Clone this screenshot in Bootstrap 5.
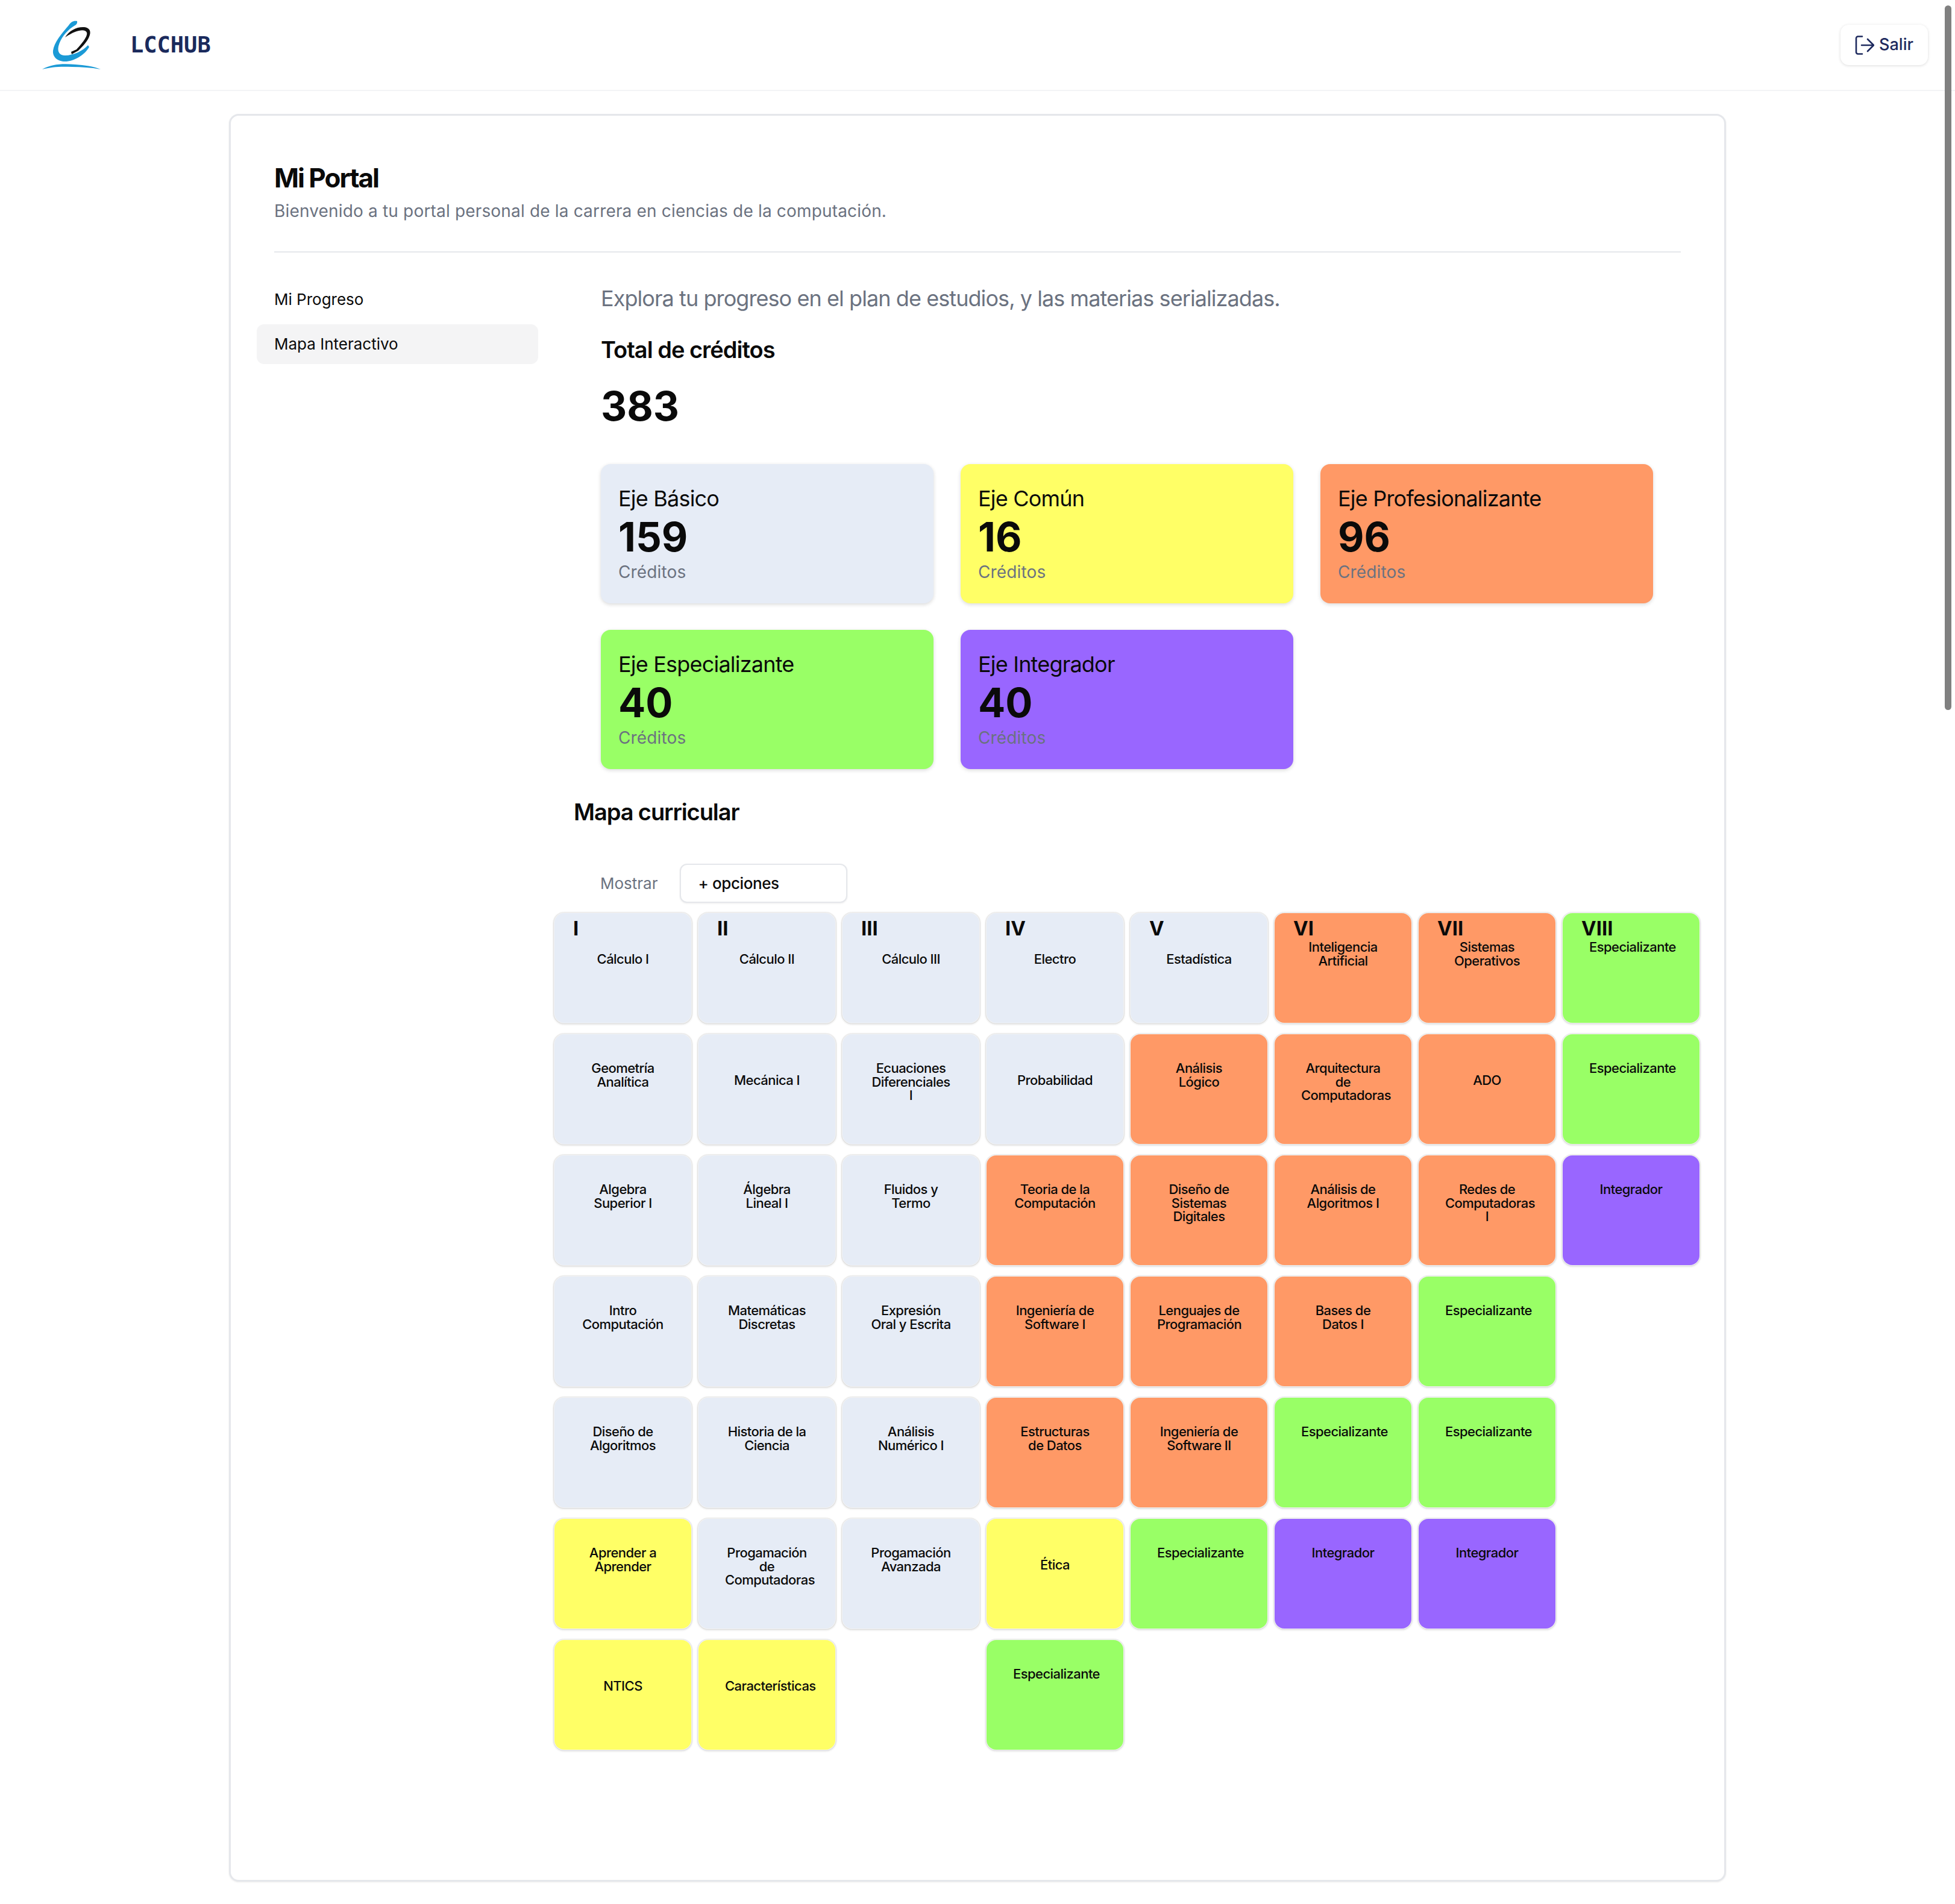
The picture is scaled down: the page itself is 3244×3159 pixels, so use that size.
<!DOCTYPE html>
<html lang="es">
<head>
    <meta charset="UTF-8">
    <title>LCCHUB - Mi Portal</title>
    <link href="https://cdn.jsdelivr.net/npm/bootstrap@5.3.0/dist/css/bootstrap.min.css" rel="stylesheet">
    <style>
        body { font-family: Inter, "Liberation Sans", sans-serif; color: #0a0a0a; background: #fff; }
        .top-bar { height: 151px; padding: 0 45px 0 70px; border-bottom: 2px solid #f3f4f6; }
        .brand-name { font-family: "DejaVu Sans Mono", monospace; font-weight: 700; font-size: 37px; color: #1a2a5c; margin-left: 49px; }
        .exit-btn { width: 145px; height: 67px; font-size: 27px; font-weight: 500; color: #1e2a5e; background: #fff; border: 1px solid transparent; border-radius: 14px; box-shadow: 0 1px 5px rgba(0,0,0,.14); }
        .fake-scroll { position: absolute; top: 9px; right: 6px; width: 11px; height: 1169px; background: #808080; border-radius: 6px; }
        .portal-box { width: 2484px; min-height: 2933px; margin: 38px auto 37px; padding: 75px 72px 0; border: 3px solid #e5e7eb; border-radius: 16px; box-shadow: 0 1px 3px rgba(0,0,0,.08); }
        .portal-title { font-size: 44px; line-height: 56px; font-weight: 700; letter-spacing: -2px; margin: 0; }
        .portal-sub { font-size: 28px; line-height: 40px; letter-spacing: .17px; color: #6b7280; margin: 7px 0 0; }
        .portal-head { padding-bottom: 47px; border-bottom: 2px solid #e5e7eb; }
        .side-menu { width: 467px; margin: 45px 0 0 -29px; flex-shrink: 0; gap: 8px; }
        .side-menu .nav-link { height: 66px; padding: 0 29px; font-size: 26px; line-height: 66px; color: #0a0a0a; border-radius: 12px; }
        .side-menu .nav-link.active { background: #f4f4f5; }
        .main-col { margin: 52px 0 0 26px; }
        .stats-area { padding-left: 78px; }
        .explore-text { font-size: 36px; line-height: 48px; letter-spacing: -.93px; color: #6b7280; margin: 0; }
        .total-title { font-size: 38px; line-height: 48px; font-weight: 600; letter-spacing: -1px; margin: 37px 0 0; }
        .total-num { font-size: 67px; line-height: 80px; font-weight: 700; margin: 30px 0 0; }
        .stats-grid { grid-template-columns: repeat(3, 552px); column-gap: 45px; row-gap: 44px; margin-top: 56px; }
        .stat-box { height: 231px; padding: 35px 29px 0; border-radius: 16px; box-shadow: 0 2px 6px rgba(0,0,0,.15); }
        .stat-name { font-size: 36px; line-height: 44px; letter-spacing: -.8px; }
        .stat-num { font-size: 67px; line-height: 76px; font-weight: 700; margin-top: 4px; }
        .stat-unit { font-size: 28px; line-height: 40px; letter-spacing: .15px; color: #6b7280; }
        .map-title { font-size: 38px; line-height: 48px; font-weight: 600; letter-spacing: -1.1px; margin: 47px 0 0 33px; }
        .show-row { margin: 62px 0 0 77px; gap: 37px; }
        .show-label { font-size: 26px; color: #6b7280; }
        .options-btn { width: 278px; height: 65px; padding: 0 28px; font-size: 26px; font-weight: 500; letter-spacing: -.4px; color: #0a0a0a; text-align: left; background: #fff; border: 2px solid #e5e7eb; border-radius: 12px; box-shadow: 0 1px 3px rgba(0,0,0,.08); }
        .map-grid { grid-template-columns: repeat(8, 231px); grid-auto-rows: 186px; column-gap: 8px; row-gap: 15px; margin: 15px 0 0 -1px; width: 1904px; }
        .subject { position: relative; padding: 45px 44px 0; font-size: 22px; line-height: 22.5px; font-weight: 500; letter-spacing: -.55px; text-align: center; overflow-wrap: normal; word-wrap: normal; border: 2px solid rgba(0,0,0,.05); border-radius: 18px; box-shadow: 0 1px 3px rgba(0,0,0,.1); background-clip: padding-box; }
        .subject.low { padding-top: 65px; }
        .sem-num { position: absolute; top: 5px; left: 31px; font-size: 33px; line-height: 40px; font-weight: 700; letter-spacing: 0; }
        .eje-basico { background-color: #e6ecf6; }
        .eje-comun { background-color: #ffff66; }
        .eje-prof { background-color: #ff9966; }
        .eje-esp { background-color: #99ff66; }
        .eje-int { background-color: #9966ff; }
    </style>
</head>
<body>

<!-- Header -->
<nav class="top-bar d-flex align-items-center justify-content-between">
    <div class="d-flex align-items-center">
        <svg width="97" height="81" viewBox="70 36 97 81">
            <path fill="#1b9ad6" d="M128 37C122 36 118 38 114 44C102 58 90 72 88 86C87 97 96 104 108 104C122 104 140 94 148 80L146 77C138 86 122 94 108 94C99 94 95 88 97 79C100 66 110 54 120 47C124 44 129 43 128 37Z"/>
            <path fill="#111" d="M108 64C115 52 128 46 140 47C148 48 151 53 149 60C146 70 138 78 130 86L119 92L118 88L127 84C136 74 146 62 144 56C142 50 128 50 108 64Z"/>
            <path fill="#1b9ad6" d="M70 117C85 108 105 107 125 109C140 110 155 112 167 117C150 114 135 113 120 113C100 112 85 113 70 117Z"/>
        </svg>
        <span class="brand-name">LCCHUB</span>
    </div>
    <button class="btn exit-btn d-flex align-items-center justify-content-center gap-2 p-0" type="button">
        <svg width="32" height="32" viewBox="0 0 32 32" fill="none" stroke="#1e2a5e" stroke-width="2.6" stroke-linecap="round" stroke-linejoin="round">
            <path d="M12 1.5H5a3 3 0 0 0-3 3v23a3 3 0 0 0 3 3h7"/>
            <path d="M11 16h20M21 6l10 10-10 10"/>
        </svg>
        Salir
    </button>
</nav>
<div class="fake-scroll"></div>

<!-- Portal -->
<div class="card portal-box">
    <div class="portal-head">
        <h1 class="portal-title">Mi Portal</h1>
        <p class="portal-sub">Bienvenido a tu portal personal de la carrera en ciencias de la computación.</p>
    </div>

    <div class="d-flex">
        <div class="nav flex-column side-menu">
            <a class="nav-link" href="#">Mi Progreso</a>
            <a class="nav-link active" href="#">Mapa Interactivo</a>
        </div>

        <div class="main-col">
            <div class="stats-area">
                <p class="explore-text">Explora tu progreso en el plan de estudios, y las materias serializadas.</p>
                <h3 class="total-title">Total de créditos</h3>
                <div class="total-num">383</div>

                <div class="d-grid stats-grid">
                    <div class="stat-box eje-basico">
                        <div class="stat-name">Eje Básico</div>
                        <div class="stat-num">159</div>
                        <div class="stat-unit">Créditos</div>
                    </div>
                    <div class="stat-box eje-comun">
                        <div class="stat-name">Eje Común</div>
                        <div class="stat-num">16</div>
                        <div class="stat-unit">Créditos</div>
                    </div>
                    <div class="stat-box eje-prof">
                        <div class="stat-name">Eje Profesionalizante</div>
                        <div class="stat-num">96</div>
                        <div class="stat-unit">Créditos</div>
                    </div>
                    <div class="stat-box eje-esp">
                        <div class="stat-name">Eje Especializante</div>
                        <div class="stat-num">40</div>
                        <div class="stat-unit">Créditos</div>
                    </div>
                    <div class="stat-box eje-int">
                        <div class="stat-name">Eje Integrador</div>
                        <div class="stat-num">40</div>
                        <div class="stat-unit">Créditos</div>
                    </div>
                </div>
            </div>

            <h3 class="map-title">Mapa curricular</h3>

            <div class="d-flex align-items-center show-row">
                <span class="show-label">Mostrar</span>
                <button class="btn options-btn" type="button">+ opciones</button>
            </div>

            <div class="d-grid map-grid">
                <div class="subject low eje-basico"><span class="sem-num">I</span>Cálculo I</div>
                <div class="subject low eje-basico"><span class="sem-num">II</span>Cálculo II</div>
                <div class="subject low eje-basico"><span class="sem-num">III</span>Cálculo III</div>
                <div class="subject low eje-basico"><span class="sem-num">IV</span>Electro</div>
                <div class="subject low eje-basico"><span class="sem-num">V</span>Estadística</div>
                <div class="subject eje-prof"><span class="sem-num">VI</span>Inteligencia Artificial</div>
                <div class="subject eje-prof"><span class="sem-num">VII</span>Sistemas Operativos</div>
                <div class="subject eje-esp"><span class="sem-num">VIII</span>Especializante</div>

                <div class="subject eje-basico">Geometría Analítica</div>
                <div class="subject low eje-basico">Mecánica I</div>
                <div class="subject eje-basico">Ecuaciones Diferenciales I</div>
                <div class="subject low eje-basico">Probabilidad</div>
                <div class="subject eje-prof">Análisis Lógico</div>
                <div class="subject eje-prof">Arquitectura de Computadoras</div>
                <div class="subject low eje-prof">ADO</div>
                <div class="subject eje-esp">Especializante</div>

                <div class="subject eje-basico">Algebra Superior I</div>
                <div class="subject eje-basico">Álgebra Lineal I</div>
                <div class="subject eje-basico">Fluidos y Termo</div>
                <div class="subject eje-prof">Teoria de la Computación</div>
                <div class="subject eje-prof">Diseño de Sistemas Digitales</div>
                <div class="subject eje-prof">Análisis de Algoritmos I</div>
                <div class="subject eje-prof">Redes de Computadoras I</div>
                <div class="subject eje-int">Integrador</div>

                <div class="subject eje-basico">Intro Computación</div>
                <div class="subject eje-basico">Matemáticas Discretas</div>
                <div class="subject eje-basico">Expresión Oral y Escrita</div>
                <div class="subject eje-prof">Ingeniería de Software I</div>
                <div class="subject eje-prof">Lenguajes de Programación</div>
                <div class="subject eje-prof">Bases de Datos I</div>
                <div class="subject eje-esp">Especializante</div>
                <div></div>

                <div class="subject eje-basico">Diseño de Algoritmos</div>
                <div class="subject eje-basico">Historia de la Ciencia</div>
                <div class="subject eje-basico">Análisis Numérico I</div>
                <div class="subject eje-prof">Estructuras de Datos</div>
                <div class="subject eje-prof">Ingeniería de Software II</div>
                <div class="subject eje-esp">Especializante</div>
                <div class="subject eje-esp">Especializante</div>
                <div></div>

                <div class="subject eje-comun">Aprender a Aprender</div>
                <div class="subject eje-basico">Progamación de Computadoras</div>
                <div class="subject eje-basico">Progamación Avanzada</div>
                <div class="subject low eje-comun">Ética</div>
                <div class="subject eje-esp">Especializante</div>
                <div class="subject eje-int">Integrador</div>
                <div class="subject eje-int">Integrador</div>
                <div></div>

                <div class="subject low eje-comun">NTICS</div>
                <div class="subject low eje-comun">Características</div>
                <div></div>
                <div class="subject eje-esp">Especializante</div>
            </div>
        </div>
    </div>
</div>

<script src="https://cdn.jsdelivr.net/npm/bootstrap@5.3.0/dist/js/bootstrap.bundle.min.js"></script>
</body>
</html>
